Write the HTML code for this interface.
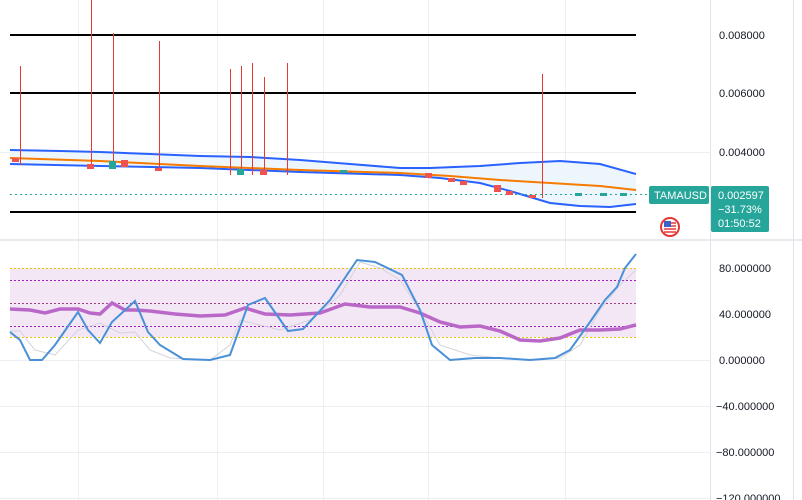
<!DOCTYPE html>
<html><head><meta charset="utf-8"><style>
body{margin:0;width:802px;height:500px;background:#fff;overflow:hidden;font-family:"Liberation Sans",sans-serif}
svg{position:absolute;left:0;top:0}
.ax{font-size:11px;fill:#131722}
</style></head><body>
<svg width="802" height="500">
<g stroke="#eceef2" stroke-width="1">
<line x1="78.5" y1="0" x2="78.5" y2="500"/><line x1="217.5" y1="0" x2="217.5" y2="500"/><line x1="323.5" y1="0" x2="323.5" y2="500"/><line x1="428.5" y1="0" x2="428.5" y2="500"/><line x1="565.5" y1="0" x2="565.5" y2="500"/>
<line x1="0" y1="152.5" x2="710" y2="152.5"/><line x1="0" y1="360.5" x2="710" y2="360.5"/><line x1="0" y1="406.5" x2="710" y2="406.5"/><line x1="0" y1="452.5" x2="710" y2="452.5"/><line x1="0" y1="498.5" x2="710" y2="498.5"/>
</g>
<line x1="0" y1="240" x2="802" y2="240" stroke="#e0e3eb" stroke-width="1.5"/>
<line x1="710.5" y1="0" x2="710.5" y2="500" stroke="#e0e3eb"/>
<line x1="793.5" y1="0" x2="793.5" y2="500" stroke="#e0e3eb"/>
<path d="M10,150 L100,152 200,156 300,160 420,168 500,165 560,161 600,164 636,174 L636,204 600,207 560,206 530,197 480,183 400,175 300,172 200,168 100,166 10,164Z" fill="#eef6fd"/>
<polyline points="10,150 60,151 100,152 150,154 200,156 250,157 300,160 350,164 400,168 430,168 480,166 520,163 560,161 600,164 636,174" fill="none" stroke="#2962ff" stroke-width="2"/>
<polyline points="10,164 100,166 200,168 300,172 400,175 440,178 480,183 510,191 530,197 550,203 580,206 610,207 636,204" fill="none" stroke="#2962ff" stroke-width="2"/>
<polyline points="10,158 100,161 200,166 300,170 400,173 450,176 500,180 550,183 600,186 636,190" fill="none" stroke="#f57c00" stroke-width="2"/>
<g stroke="#000" stroke-width="2"><line x1="10" y1="35" x2="636" y2="35"/><line x1="10" y1="93" x2="636" y2="93"/><line x1="10" y1="212" x2="636" y2="212"/></g>
<line x1="10" y1="194.5" x2="710" y2="194.5" stroke="#26a69a" stroke-dasharray="2 3"/>
<g stroke="#e53935" stroke-width="1">
<line x1="20.5" y1="66" x2="20.5" y2="165"/><line x1="91.5" y1="0" x2="91.5" y2="168"/><line x1="113.5" y1="33" x2="113.5" y2="168"/><line x1="159.5" y1="41" x2="159.5" y2="170"/><line x1="230.5" y1="69" x2="230.5" y2="175"/><line x1="241.5" y1="66" x2="241.5" y2="175"/><line x1="252.5" y1="63" x2="252.5" y2="175"/><line x1="264.5" y1="77" x2="264.5" y2="175"/><line x1="287.5" y1="63" x2="287.5" y2="175"/><line x1="542.5" y1="74" x2="542.5" y2="198"/>
</g>
<g fill="#ef5350">
<rect x="12" y="158" width="7" height="4"/><rect x="87" y="164" width="7" height="5"/><rect x="121" y="160" width="7" height="7"/><rect x="155" y="168" width="7" height="3"/><rect x="260" y="170" width="7" height="5"/><rect x="425" y="173" width="7" height="5"/><rect x="448" y="178" width="7" height="4"/><rect x="460" y="181" width="7" height="4"/><rect x="494" y="185" width="7" height="7"/><rect x="506" y="191" width="7" height="4"/><rect x="529" y="195" width="7" height="3"/>
</g>
<g fill="#26a69a"><rect x="109" y="161" width="7" height="8"/><rect x="237" y="169" width="7" height="6"/><rect x="340" y="170" width="7" height="3"/><rect x="575" y="193" width="7" height="3"/><rect x="600" y="193" width="7" height="3"/><rect x="620" y="193" width="7" height="3"/></g>
<rect x="10" y="268" width="626" height="69" fill="#f3e7f6"/>
<g stroke-dasharray="2 2" stroke-width="1">
<line x1="10" y1="268.5" x2="636" y2="268.5" stroke="#e6c800"/><line x1="10" y1="337.5" x2="636" y2="337.5" stroke="#e6c800"/>
<line x1="10" y1="280.5" x2="636" y2="280.5" stroke="#a020c0"/><line x1="10" y1="303.5" x2="636" y2="303.5" stroke="#a04080"/><line x1="10" y1="326.5" x2="636" y2="326.5" stroke="#a020c0"/>
</g>
<polyline points="10,331 20,331 35,350 55,355 78,330 100,323 120,333 135,332 150,350 170,358 210,360 230,345 240,320 260,325 280,330 310,320 340,295 360,262 380,268 400,280 420,310 440,345 470,355 500,358 540,360 560,358 580,345 600,310 620,285 636,270" fill="none" stroke="#d1d4dc" stroke-width="1"/>
<polyline points="10,309 30,310 45,313 60,309 78,309 90,313 100,314 112,303 125,310 135,310 150,311 175,314 200,316 225,315 245,308 265,314 290,315 320,313 345,304 370,307 400,307 420,313 440,322 460,327 480,326 500,331 520,340 540,341 560,338 580,330 600,330 620,329 636,325" fill="none" stroke="#ba68c8" stroke-width="3.5"/>
<polyline points="10,332 20,340 30,360 42,360 55,345 78,312 88,330 100,343 112,322 135,301 148,332 160,345 183,359 210,360 230,355 248,305 265,298 288,331 303,329 330,300 357,260 375,262 402,275 420,310 432,345 450,360 475,358 500,358 530,360 555,358 570,350 590,322 605,300 617,287 625,268 636,254" fill="none" stroke="#4a90d9" stroke-width="2"/>
<g class="ax"><text x="719" y="39">0.008000</text><text x="719" y="97">0.006000</text><text x="719" y="156">0.004000</text>
<text x="719" y="272">80.000000</text><text x="719" y="318">40.000000</text><text x="719" y="364">0.000000</text><text x="716" y="410">−40.000000</text><text x="716" y="456">−80.000000</text><text x="716" y="502">−120.000000</text></g>
<rect x="649" y="186" width="60" height="18" rx="2" fill="#26a69a"/>
<text x="654" y="199" font-size="11" fill="#fff">TAMAUSD</text>
<rect x="711" y="186" width="58" height="46" rx="2" fill="#26a69a"/>
<g font-size="11" fill="#fff"><text x="718" y="199">0.002597</text><text x="718" y="213">−31.73%</text><text x="718" y="227">01:50:52</text></g>
<circle cx="670" cy="227" r="9" fill="#fff" stroke="#e53935" stroke-width="2"/>
<rect x="664" y="221" width="7" height="6" fill="#3b63c8"/><path d="M664,229h12M664,232h12M671,223h5M671,226h5" stroke="#e53935" stroke-width="1.5"/>
</svg>
</body></html>
